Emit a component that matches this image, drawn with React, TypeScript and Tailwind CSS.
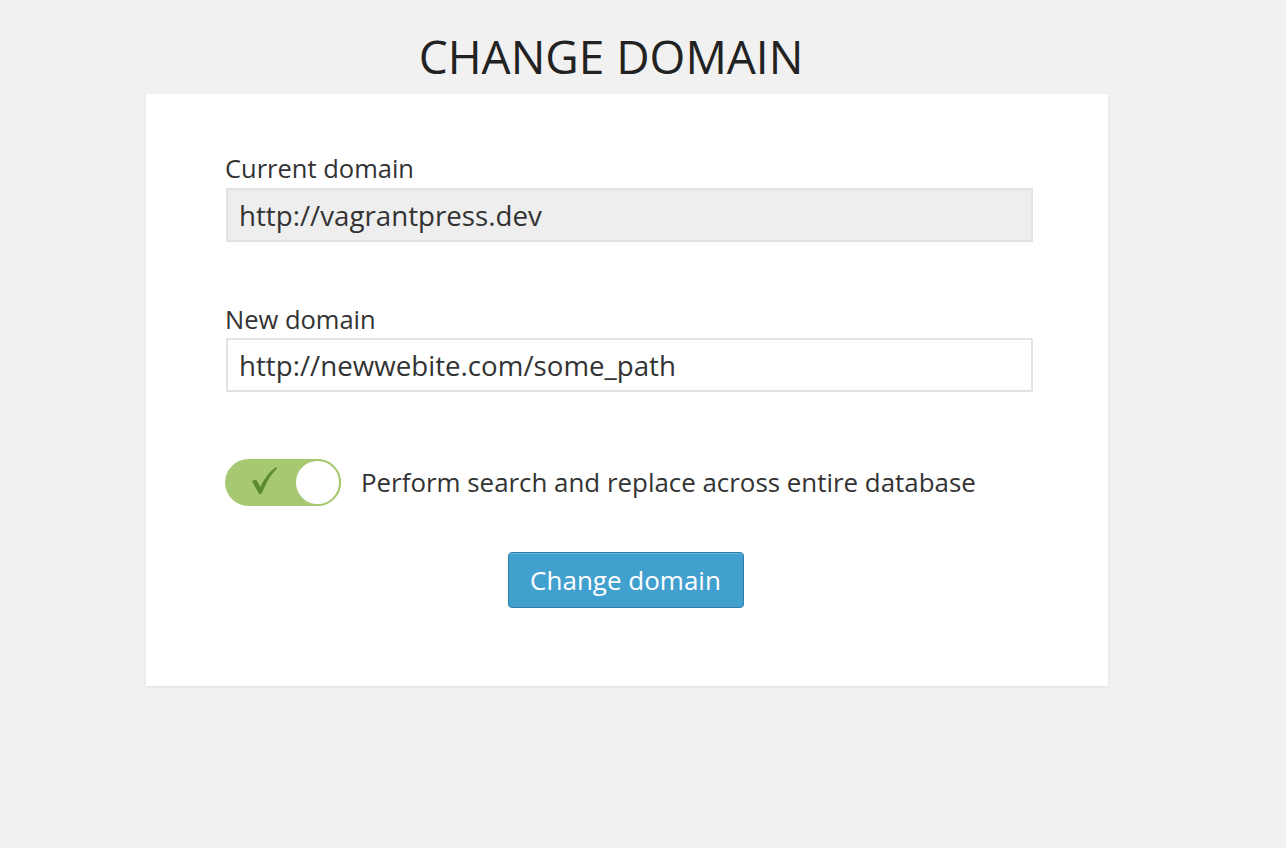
import { useState } from "react";

export default function App() {
  const [current] = useState("http://vagrantpress.dev");
  const [next, setNext] = useState("http://newwebite.com/some_path");
  const [replaceAll, setReplaceAll] = useState(true);

  return (
    <div className="min-h-screen bg-[#f1f1f1] pt-[26px] text-[#333]" style={{ fontFamily: '"Open Sans", sans-serif' }}>
      <div className="w-[962px] ml-[146px]">
        <h1 className="text-center text-[46px] leading-[60px] text-[#222] pr-[32px] mb-[8px]">CHANGE DOMAIN</h1>

        <div className="bg-white shadow-[0_1px_3px_rgba(0,0,0,0.08)] pt-[59px] pb-[78px] pl-[79px] pr-[76px]">
          {/* current */}
          <div className="space-y-[5px]">
            <label className="block text-[25.5px] leading-[30px] text-[#333]">Current domain</label>
            <input
              readOnly
              className="block w-full h-[54px] ml-[1px] border-2 border-[#e3e3e3] bg-[#eeeeee] px-[11px] text-[27.7px] text-[#333] outline-none"
              value={current}
            />
          </div>

          {/* new */}
          <div className="space-y-[4px] mt-[62px]">
            <label className="block text-[25.5px] leading-[30px] text-[#333]">New domain</label>
            <input
              className="block w-full h-[54px] ml-[1px] border-2 border-[#e3e3e3] bg-white px-[11px] text-[27.7px] text-[#333] outline-none"
              value={next}
              onChange={(e) => setNext(e.target.value)}
            />
          </div>

          {/* toggle */}
          <div className="flex items-center gap-[20px] mt-[67px]">
            <button
              onClick={() => setReplaceAll(!replaceAll)}
              className={`relative w-[116px] h-[47px] rounded-full shrink-0 ${replaceAll ? "bg-[#a5c871]" : "bg-[#ddd]"}`}
            >
              {replaceAll && (
                <svg className="absolute left-[24px] top-[6px]" width="30" height="32" viewBox="0 0 30 32">
                  <path d="M3 16 L7 14.5 L11.5 22 C15 14 20 7 27 2 L28 3.5 C22 9 17 18 12.5 29 L10 29 Z" fill="#5c8a2c" />
                </svg>
              )}
              <span
                className={`absolute top-0 w-[47px] h-[47px] rounded-full bg-white border-2 border-[#a5c871] ${replaceAll ? "right-0" : "left-0"}`}
              />
            </button>
            <span className="text-[25.9px] text-[#333]">Perform search and replace across entire database</span>
          </div>

          {/* submit */}
          <div className="flex justify-center mt-[46px]">
            <button className="w-[236px] h-[56px] rounded-[4px] bg-[#42a0cf] border border-[#2c7ea9] shadow-[inset_0_1px_0_rgba(255,255,255,0.25)] text-white text-[26px] ml-[-6px]">
              Change domain
            </button>
          </div>
        </div>
      </div>
    </div>
  );
}
